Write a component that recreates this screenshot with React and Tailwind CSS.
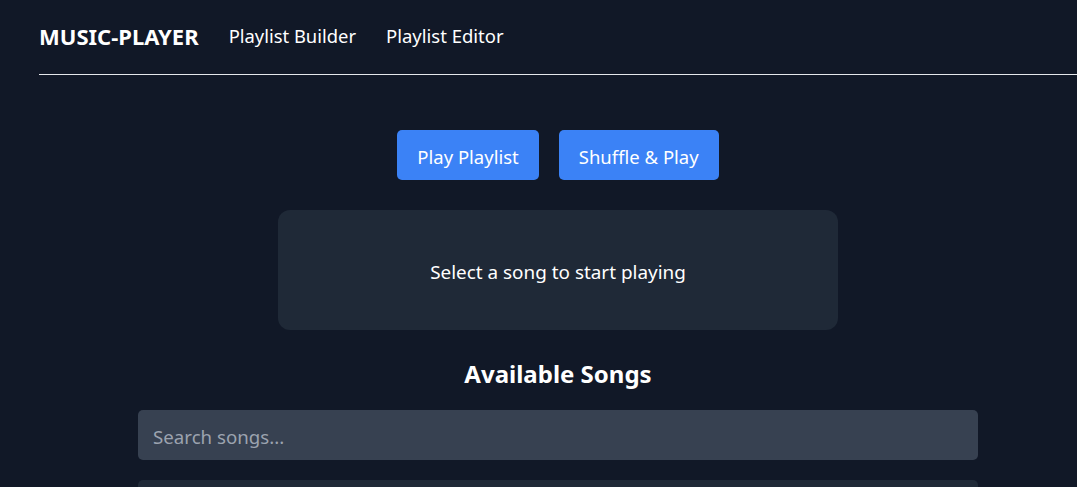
export default function App() {
  return (
    <div className="min-h-screen bg-[#111827] text-white overflow-hidden" style={{ fontFamily: '"Noto Sans", "Open Sans", sans-serif' }}>
      <div className="ml-[39px] w-[1038px]">
        <nav className="h-[75px] flex items-center gap-[30px] border-b border-[#e5e7eb] pb-[2px]">
          <span className="text-[22px] font-bold tracking-[0px]">MUSIC-PLAYER</span>
          <span className="text-[18.4px]">Playlist Builder</span>
          <span className="text-[18.5px]">Playlist Editor</span>
        </nav>
        <main className="flex flex-col items-center pt-[55px]">
          <div className="flex gap-[20px]">
            <button className="h-[50px] px-[20px] pt-[3px] rounded-[5px] bg-[#3b82f6] text-[18.5px]">Play Playlist</button>
            <button className="h-[50px] px-[20px] pt-[3px] rounded-[5px] bg-[#3b82f6] text-[18.5px]">Shuffle &amp; Play</button>
          </div>
          <div className="mt-[30px] w-[560px] h-[120px] rounded-[12px] bg-[#1f2937] flex items-center justify-center text-[18.9px] pt-[4px]">
            Select a song to start playing
          </div>
          <h2 className="mt-[26px] text-[24px] font-bold leading-[36px]">Available Songs</h2>
          <input
            className="mt-[18px] w-[840px] h-[50px] rounded-[5px] bg-[#374151] px-[15px] pt-[2px] text-[18.7px] text-white placeholder:text-[#9ca3af] outline-none"
            placeholder="Search songs..."
          />
          <div className="mt-[20px] w-[840px] h-[60px] rounded-[5px] bg-[#1f2937]"></div>
        </main>
      </div>
    </div>
  );
}
